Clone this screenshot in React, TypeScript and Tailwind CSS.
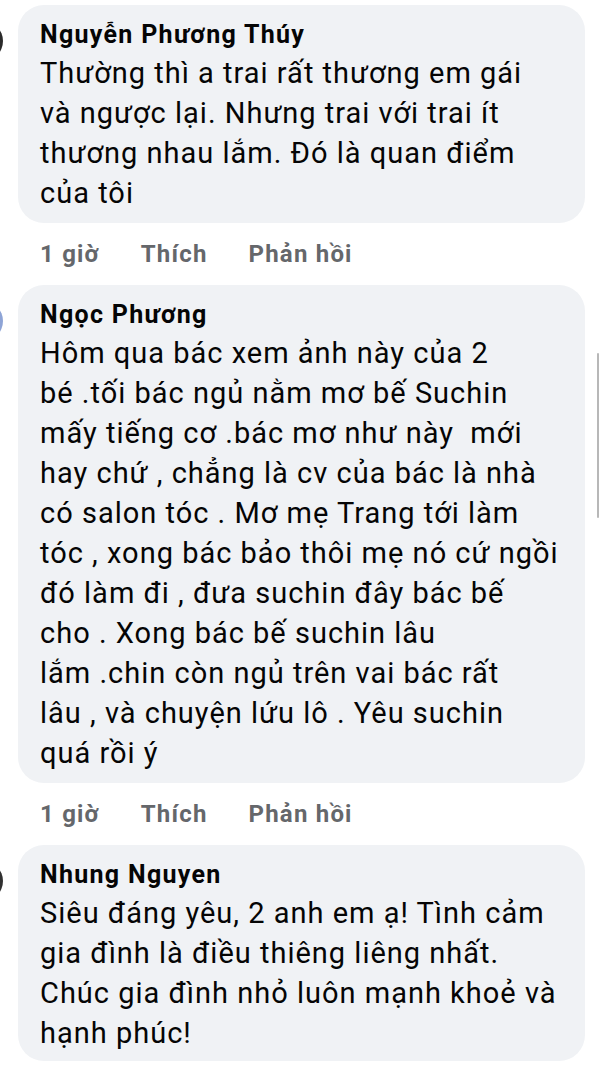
import React from 'react';

interface Comment {
  id: number;
  author: string;
  lines: string[];
  avatar: string;
  time?: string;
  last?: boolean;
}

const comments: Comment[] = [
  {
    id: 1,
    author: 'Nguyễn Phương Thúy',
    avatar: 'bg-[#2a2a2a]',
    time: '1 giờ',
    lines: [
      'Thường thì a trai rất thương em gái',
      'và ngược lại. Nhưng trai với trai ít',
      'thương nhau lắm. Đó là quan điểm',
      'của tôi'
    ]
  },
  {
    id: 2,
    author: 'Ngọc Phương',
    avatar: 'bg-[#8ea4d6]',
    time: '1 giờ',
    lines: [
      'Hôm qua bác xem ảnh này của 2',
      'bé .tối bác ngủ nằm mơ bế Suchin',
      'mấy tiếng cơ .bác mơ như này  mới',
      'hay chứ , chẳng là cv của bác là nhà',
      'có salon tóc . Mơ mẹ Trang tới làm',
      'tóc , xong bác bảo thôi mẹ nó cứ ngồi',
      'đó làm đi , đưa suchin đây bác bế',
      'cho . Xong bác bế suchin lâu',
      'lắm .chin còn ngủ trên vai bác rất',
      'lâu , và chuyện lứu lô . Yêu suchin',
      'quá rồi ý'
    ]
  },
  {
    id: 3,
    author: 'Nhung Nguyen',
    avatar: 'bg-[#303030]',
    last: true,
    lines: [
      'Siêu đáng yêu, 2 anh em ạ! Tình cảm',
      'gia đình là điều thiêng liêng nhất.',
      'Chúc gia đình nhỏ luôn mạnh khoẻ và',
      'hạnh phúc!'
    ]
  }
];

const CommentItem: React.FC<{ comment: Comment }> = ({ comment }) => {
  return (
    <div>
      <div className="flex items-start">
        <div className={`mt-[16px] w-[40px] h-[40px] -ml-[37px] rounded-full shrink-0 ${comment.avatar}`}></div>
        <div
          className={`ml-[15px] w-[567px] rounded-[26px] bg-[#f0f2f5] pl-[22px] pr-4 pt-[15px] ${
            comment.last ? 'pb-[8px]' : 'pb-[10px]'
          }`}
        >
          <div className="text-[25px] leading-[29px] tracking-[1.3px] font-bold text-[#050505] whitespace-nowrap">
            {comment.author}
          </div>
          <div className="mt-1 text-[29px] leading-[40px] tracking-[1px] text-[#050505]">
            {comment.lines.map((line, i) => (
              <div key={i} className="whitespace-pre">
                {line}
              </div>
            ))}
          </div>
        </div>
      </div>
      {comment.time && (
        <div className="flex gap-[41px] pl-[40px] pt-[16px] pb-[16px] h-[62px] text-[24px] leading-[30px] tracking-[1.2px] font-bold text-[#65676b]">
          <span>{comment.time}</span>
          <span>Thích</span>
          <span>Phản hồi</span>
        </div>
      )}
    </div>
  );
};

const App: React.FC = () => {
  return (
    <div
      className="relative w-[600px] h-[1077px] overflow-hidden bg-white pt-[5px]"
      style={{ fontFamily: 'Roboto, "Noto Sans", sans-serif' }}
    >
      {comments.map((c) => (
        <CommentItem key={c.id} comment={c} />
      ))}
      <div className="absolute right-[1px] top-[353px] w-[2px] h-[165px] bg-[#b8b8b8] rounded-full"></div>
    </div>
  );
};

export default App;
